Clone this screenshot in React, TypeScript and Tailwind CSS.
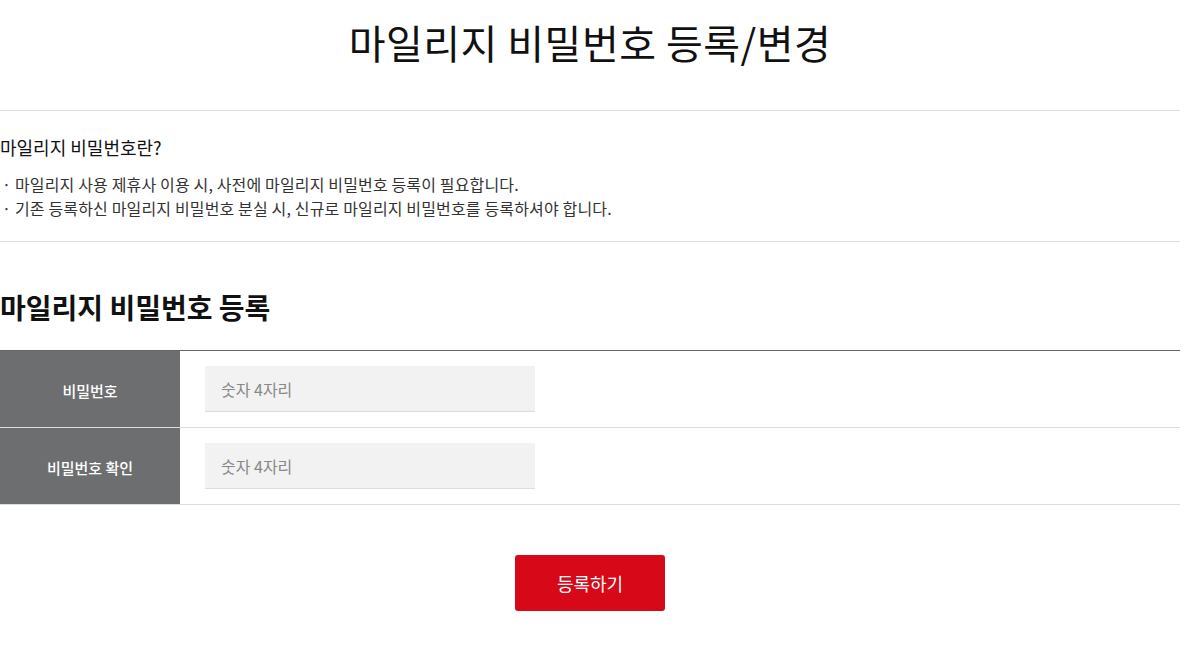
export default function App() {
    return (
        <div className="w-[1180px] bg-white font-['Noto_Sans_CJK_KR',sans-serif] text-[#111]">
            <h1 className="pt-[14px] pb-[40px] text-center text-[40px] leading-[56px] font-normal tracking-[0.5px]">
                마일리지 비밀번호 등록/변경
            </h1>

            {/* Guide */}
            <div className="border-t border-b border-[#dddddd] pt-[24px] pb-[21px]">
                <h3 className="text-[18px] leading-[24px] font-normal">
                    마일리지 비밀번호란?
                </h3>
                <ul className="mt-[13px] text-[16px] leading-[24px] tracking-[0.15px] text-[#333]">
                    <li className="flex">
                        <span className="w-[15px] shrink-0 pl-[2px]">·</span>
                        마일리지 사용 제휴사 이용 시, 사전에 마일리지 비밀번호 등록이 필요합니다.
                    </li>
                    <li className="flex">
                        <span className="w-[15px] shrink-0 pl-[2px]">·</span>
                        기존 등록하신 마일리지 비밀번호 분실 시, 신규로 마일리지 비밀번호를 등록하셔야 합니다.
                    </li>
                </ul>
            </div>

            {/* Register */}
            <h2 className="pt-[46px] pb-[24px] text-[28px] leading-[38px] font-bold">
                마일리지 비밀번호 등록
            </h2>

            <div className="border-t border-[#666666]">
                {['비밀번호', '비밀번호 확인'].map((label) => (
                    <div key={label} className="flex h-[77px] border-b border-[#dddddd]">
                        <div className="flex w-[180px] items-center justify-center bg-[#6d6e70] pt-[4px] text-[15px] font-medium text-white">
                            {label}
                        </div>
                        <div className="flex items-center pl-[25px]">
                            <input
                                type="password"
                                placeholder="숫자 4자리"
                                className="h-[46px] w-[330px] border-b border-[#dddddd] bg-[#f2f2f2] px-[16px] text-[16px] outline-none placeholder:text-[#888]"
                            />
                        </div>
                    </div>
                ))}
            </div>

            <div className="flex justify-center pt-[50px] pb-[46px]">
                <button
                    type="button"
                    className="h-[56px] w-[150px] rounded-[3px] bg-[#d70818] text-[18px] font-normal text-white"
                >
                    등록하기
                </button>
            </div>
        </div>
    );
}
